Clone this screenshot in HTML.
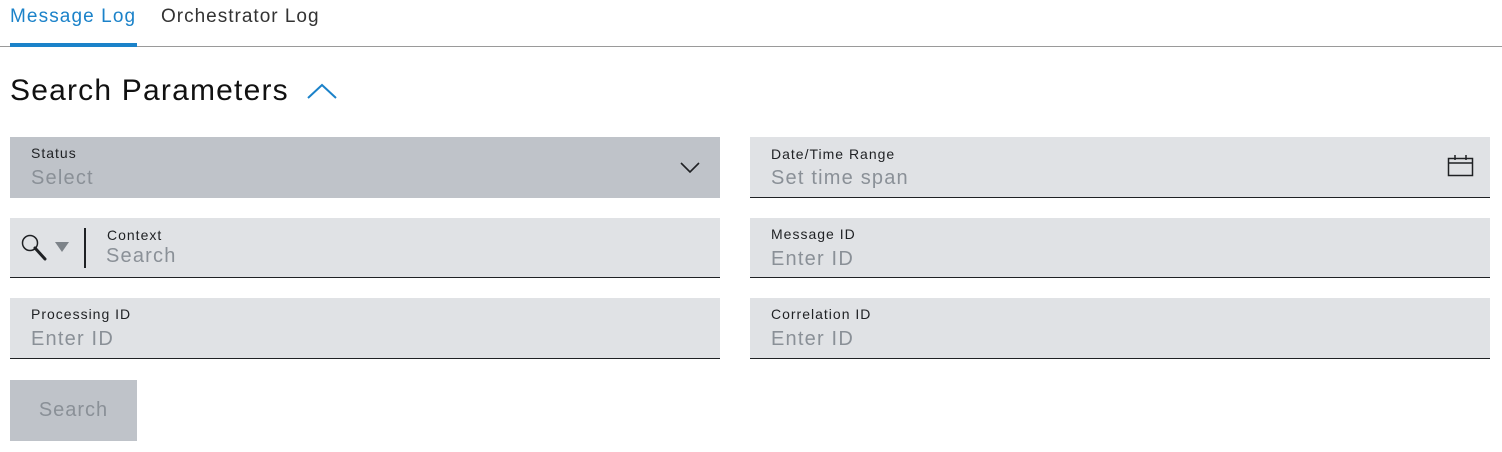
<!DOCTYPE html><html><head><style>
body{margin:0;width:1502px;height:452px;background:#fff;font-family:"Liberation Sans",sans-serif;position:relative;overflow:hidden}
.a{position:absolute}
.f{position:absolute;background:#e0e2e5;border-bottom:1px solid #1f2124;box-sizing:border-box}
.l{position:absolute;font-size:14px;color:#1f2124;letter-spacing:1px}
.p{position:absolute;font-size:20px;color:#8a9097;letter-spacing:1.2px}
</style></head><body>
<div class="a" style="left:10px;top:6px;font-size:19px;color:#1b82c9;letter-spacing:1.1px">Message Log</div>
<div class="a" style="left:161px;top:6px;font-size:19px;color:#333;letter-spacing:1px">Orchestrator Log</div>
<div class="a" style="left:0;top:46px;width:1502px;height:1px;background:#9a9a9a"></div>
<div class="a" style="left:10px;top:43px;width:127px;height:4px;background:#1b82c9"></div>
<div class="a" style="left:10px;top:74px;font-size:30px;color:#111;letter-spacing:1.2px">Search Parameters</div>
<svg class="a" style="left:306px;top:82px" width="32" height="18"><path d="M2 16L16 3L30 16" fill="none" stroke="#1b82c9" stroke-width="2"/></svg>

<div class="a" style="left:10px;top:137px;width:710px;height:61px;background:#bfc3c9"></div>
<div class="l" style="left:31px;top:145px">Status</div>
<div class="p" style="left:31px;top:167px">Select</div>
<svg class="a" style="left:680px;top:160px" width="20" height="14"><path d="M1 3L10 12L19 3" fill="none" stroke="#1f2124" stroke-width="1.6"/></svg>

<div class="f" style="left:750px;top:137px;width:740px;height:61px"></div>
<div class="l" style="left:771px;top:146px">Date/Time Range</div>
<div class="p" style="left:771px;top:167px">Set time span</div>
<svg class="a" style="left:1447px;top:155px" width="28" height="22"><rect x="1.5" y="3.5" width="24" height="17" fill="none" stroke="#1f2124" stroke-width="1.5"/><line x1="1.5" y1="8" x2="25.5" y2="8" stroke="#1f2124" stroke-width="1.5"/><line x1="8" y1="0" x2="8" y2="5" stroke="#1f2124" stroke-width="1.5"/><line x1="19" y1="0" x2="19" y2="5" stroke="#1f2124" stroke-width="1.5"/></svg>

<div class="f" style="left:10px;top:218px;width:710px;height:60px"></div>
<svg class="a" style="left:20px;top:233px" width="30" height="30"><circle cx="10" cy="10" r="7.5" fill="none" stroke="#1f2124" stroke-width="1.5"/><path d="M15 15L25 26" stroke="#1f2124" stroke-width="3" stroke-linecap="round"/></svg>
<svg class="a" style="left:55px;top:242px" width="14" height="10"><path d="M0 0H14L7 10Z" fill="#7d8389"/></svg>
<div class="a" style="left:84px;top:228px;width:2px;height:40px;background:#1f2124"></div>
<div class="l" style="left:107px;top:227px">Context</div>
<div class="p" style="left:106px;top:245px">Search</div>

<div class="f" style="left:750px;top:218px;width:740px;height:60px"></div>
<div class="l" style="left:771px;top:226px">Message ID</div>
<div class="p" style="left:771px;top:248px">Enter ID</div>

<div class="f" style="left:10px;top:298px;width:710px;height:61px"></div>
<div class="l" style="left:31px;top:306px">Processing ID</div>
<div class="p" style="left:31px;top:328px">Enter ID</div>

<div class="f" style="left:750px;top:298px;width:740px;height:61px"></div>
<div class="l" style="left:771px;top:306px">Correlation ID</div>
<div class="p" style="left:771px;top:328px">Enter ID</div>

<div class="a" style="left:10px;top:380px;width:127px;height:61px;background:#bfc3c9"></div>
<div class="a" style="left:10px;top:399px;width:127px;text-align:center;font-size:20px;color:#8a9097;letter-spacing:1px">Search</div>
</body></html>
